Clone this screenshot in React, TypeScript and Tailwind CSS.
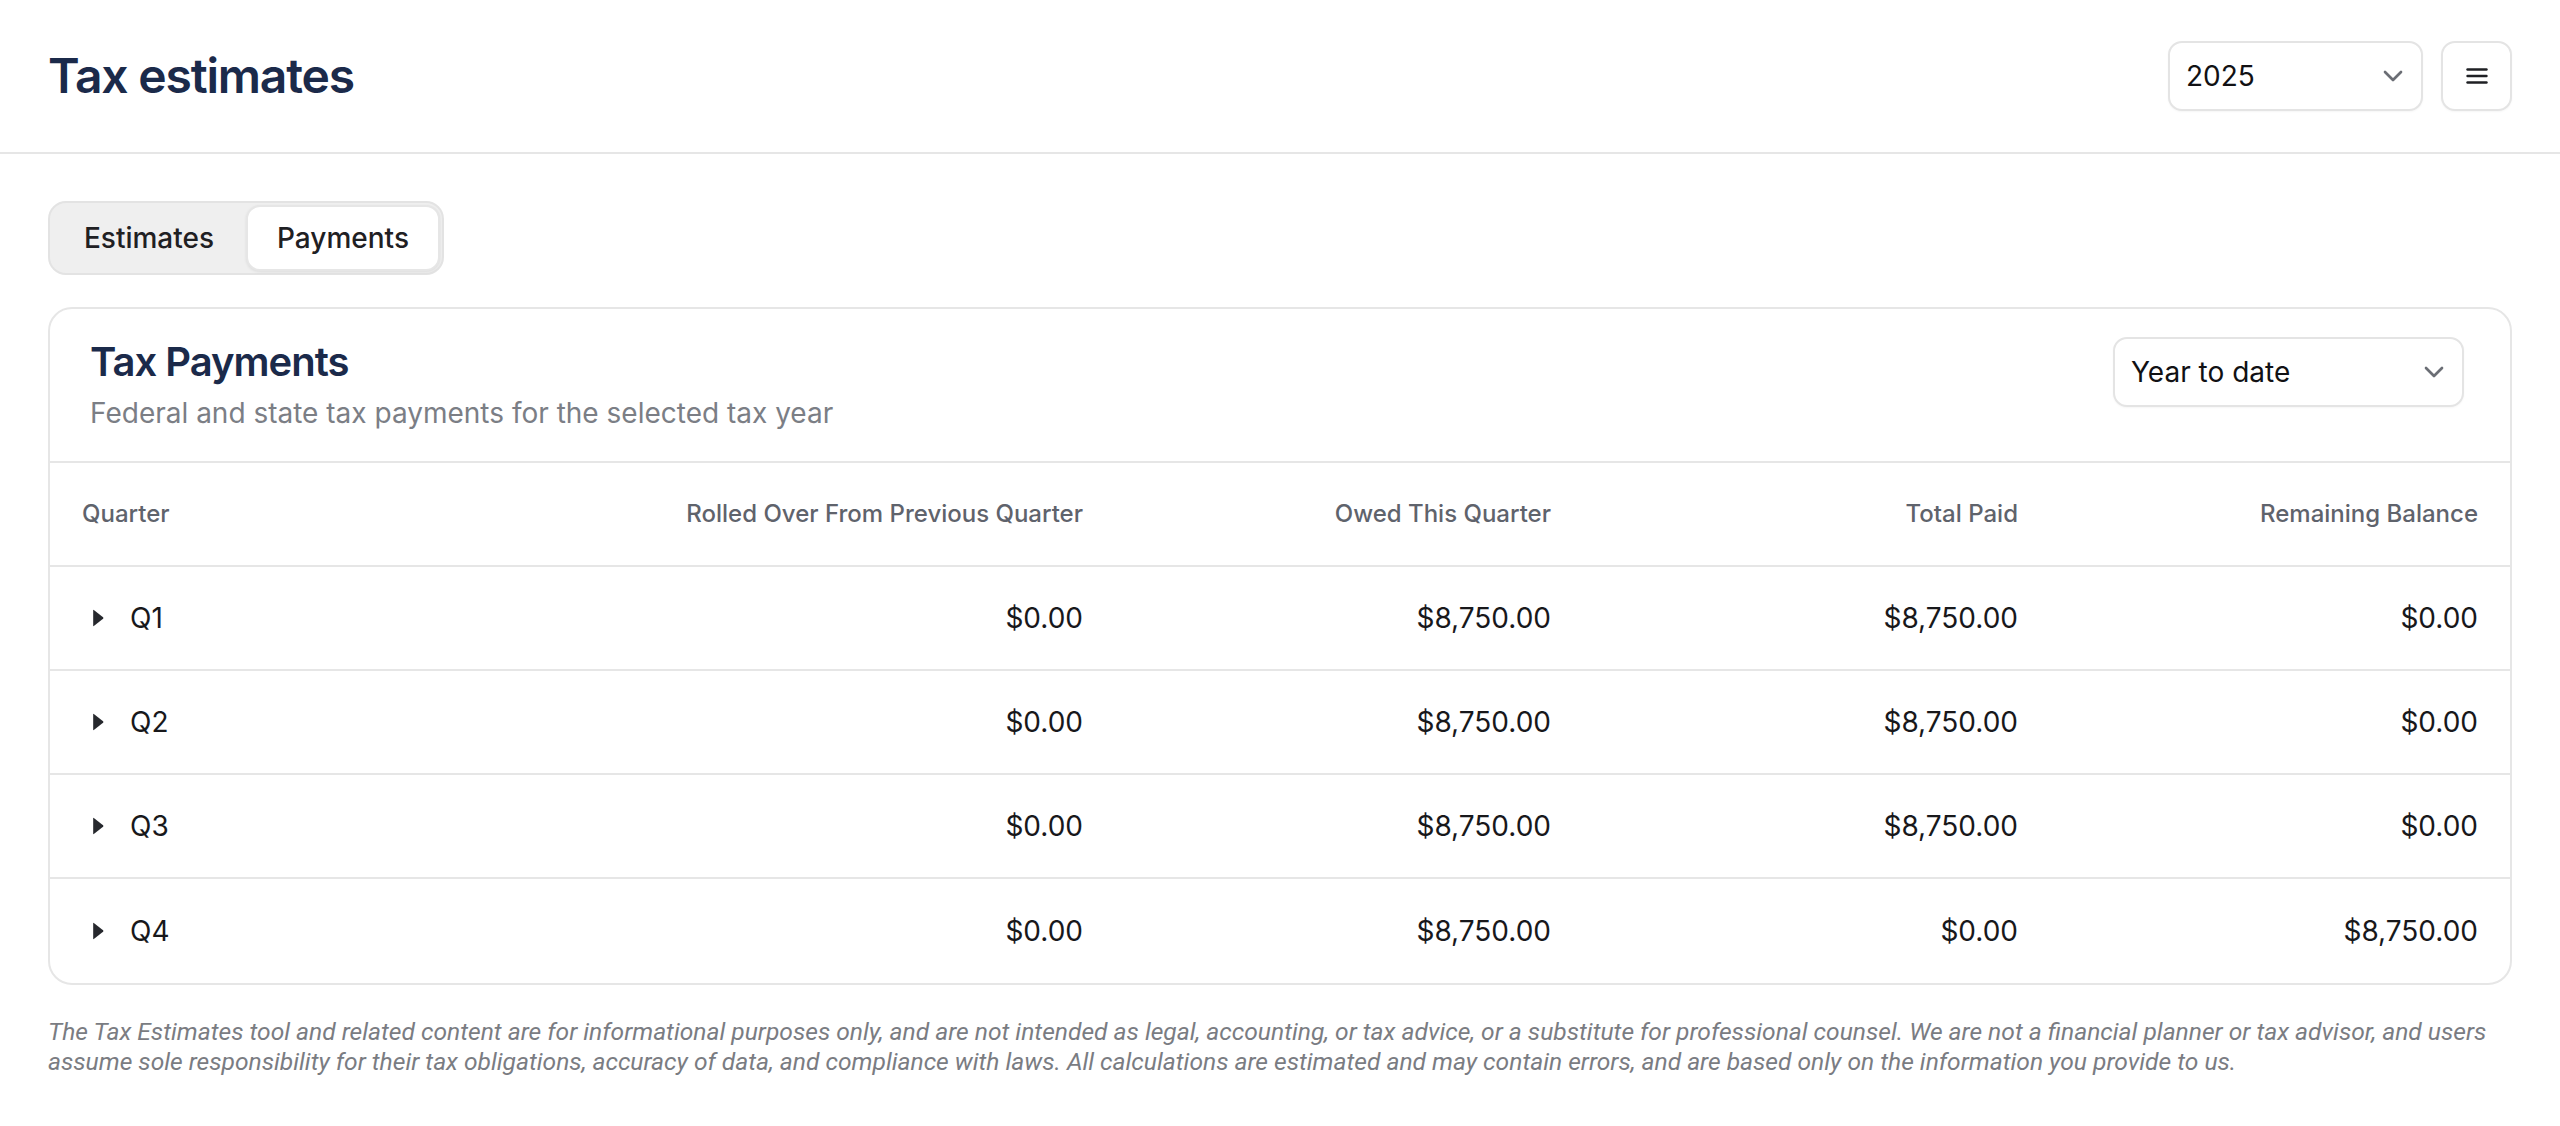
import { ChevronDown } from 'lucide-react';

// Quarterly payment rows shown in the table
type QuarterRow = {
  quarter: string;
  rolledOver: string;
  owed: string;
  paid: string;
  remaining: string;
};

const rows: QuarterRow[] = [
  { quarter: 'Q1', rolledOver: '$0.00', owed: '$8,750.00', paid: '$8,750.00', remaining: '$0.00' },
  { quarter: 'Q2', rolledOver: '$0.00', owed: '$8,750.00', paid: '$8,750.00', remaining: '$0.00' },
  { quarter: 'Q3', rolledOver: '$0.00', owed: '$8,750.00', paid: '$8,750.00', remaining: '$0.00' },
  { quarter: 'Q4', rolledOver: '$0.00', owed: '$8,750.00', paid: '$0.00', remaining: '$8,750.00' },
];

const cols = 'grid grid-cols-[1fr_535px_468px_467px_460px]';

const SelectBox = ({ label, width }: { label: string; width: string }) => (
  <button
    className={`${width} h-[70px] flex items-center justify-between pl-4 pr-3 rounded-[14px] border-2 border-[#e4e4e4] bg-white shadow-[0_1px_2px_rgba(0,0,0,0.04)] text-[28px] text-[#111114]`}
  >
    <span>{label}</span>
    <ChevronDown size={32} strokeWidth={2} className="text-[#6b6e75]" />
  </button>
);

const Caret = () => (
  <span className="w-8 h-8 flex items-center justify-center">
    <svg width="11" height="18" viewBox="0 0 10 17">
      <path d="M0.6 0.9 L9.3 7.7 Q10 8.5 9.3 9.3 L0.6 16.1 Q0 16.5 0 15.7 V1.3 Q0 0.5 0.6 0.9 Z" fill="#26282d" />
    </svg>
  </span>
);

export default function App() {
  return (
    <div className="min-h-screen bg-white font-['Inter','Noto_Sans',sans-serif] text-[#18181b]">
      {/* Top bar */}
      <header className="h-[154px] border-b-2 border-[#e6e6e6] px-12 flex items-center justify-between">
        <h1 className="text-[48px] font-semibold tracking-tight text-[#1b2a4a]">Tax estimates</h1>
        <div className="flex items-center gap-[18px]">
          <SelectBox label="2025" width="w-[255px]" />
          <button className="w-[71px] h-[70px] flex items-center justify-center rounded-[14px] border-2 border-[#e4e4e4] bg-white shadow-[0_1px_2px_rgba(0,0,0,0.04)]">
            <svg width="24" height="18" viewBox="0 0 24 18" fill="none" stroke="#1f2024" strokeWidth="2.4" strokeLinecap="round">
              <path d="M2.5 2.5h19" />
              <path d="M2.5 9h19" />
              <path d="M2.5 15.5h19" />
            </svg>
          </button>
        </div>
      </header>

      <main className="px-12 pt-[47px]">
        {/* Tabs */}
        <div className="inline-flex p-[2px] rounded-[18px] border-2 border-[#e3e3e3] bg-[#efefef]">
          <button className="w-[194px] h-[66px] rounded-[14px] text-[28px] font-medium text-[#1f2023]">Estimates</button>
          <button className="w-[194px] h-[66px] rounded-[14px] bg-white border-2 border-[#e6e6e6] shadow-[0_1px_3px_rgba(0,0,0,0.08)] text-[28px] font-medium text-[#1f2023]">
            Payments
          </button>
        </div>

        {/* Payments card */}
        <section className="mt-8 rounded-[24px] border-2 border-[#e6e6e6] bg-white overflow-hidden">
          <div className="flex items-start justify-between pl-[40px] pr-[46px] pt-[29px] pb-[28px] border-b-2 border-[#e6e6e6]">
            <div>
              <h2 className="text-[40px] leading-[48px] font-semibold tracking-tight text-[#1b2a4a]">Tax Payments</h2>
              <p className="mt-[7px] text-[28px] leading-[40px] text-[#7b7e85]">Federal and state tax payments for the selected tax year</p>
            </div>
            <div className="-mt-[1px]">
              <SelectBox label="Year to date" width="w-[351px]" />
            </div>
          </div>

          {/* Table header */}
          <div className={`${cols} h-[104px] border-b-2 border-[#e6e6e6] items-center text-[24px] font-medium text-[#5f636c]`}>
            <div className="pl-8">Quarter</div>
            <div className="pr-8 text-right">Rolled Over From Previous Quarter</div>
            <div className="pr-8 text-right">Owed This Quarter</div>
            <div className="pr-8 text-right">Total Paid</div>
            <div className="pr-8 text-right">Remaining Balance</div>
          </div>

          {/* Table rows */}
          {rows.map((row, i) => (
            <div
              key={row.quarter}
              className={`${cols} h-[104px] items-center text-[28px] text-[#18181b] ${i < rows.length - 1 ? 'border-b-2 border-[#e6e6e6]' : ''}`}
            >
              <div className="pl-8 flex items-center gap-4">
                <Caret />
                <span>{row.quarter}</span>
              </div>
              <div className="pr-8 text-right">{row.rolledOver}</div>
              <div className="pr-8 text-right">{row.owed}</div>
              <div className="pr-8 text-right">{row.paid}</div>
              <div className="pr-8 text-right">{row.remaining}</div>
            </div>
          ))}
        </section>

        {/* Disclaimer */}
        <p className="mt-[32px] font-['Roboto','Inter',sans-serif] text-[24.6px] leading-[30px] italic text-[#7a7c82]">
          The Tax Estimates tool and related content are for informational purposes only, and are not intended as legal,
          accounting, or tax advice, or a substitute for professional counsel. We are not a financial planner or tax
          advisor, and users assume sole responsibility for their tax obligations, accuracy of data, and compliance with
          laws. All calculations are estimated and may contain errors, and are based only on the information you provide
          to us.
        </p>
      </main>
    </div>
  );
}
